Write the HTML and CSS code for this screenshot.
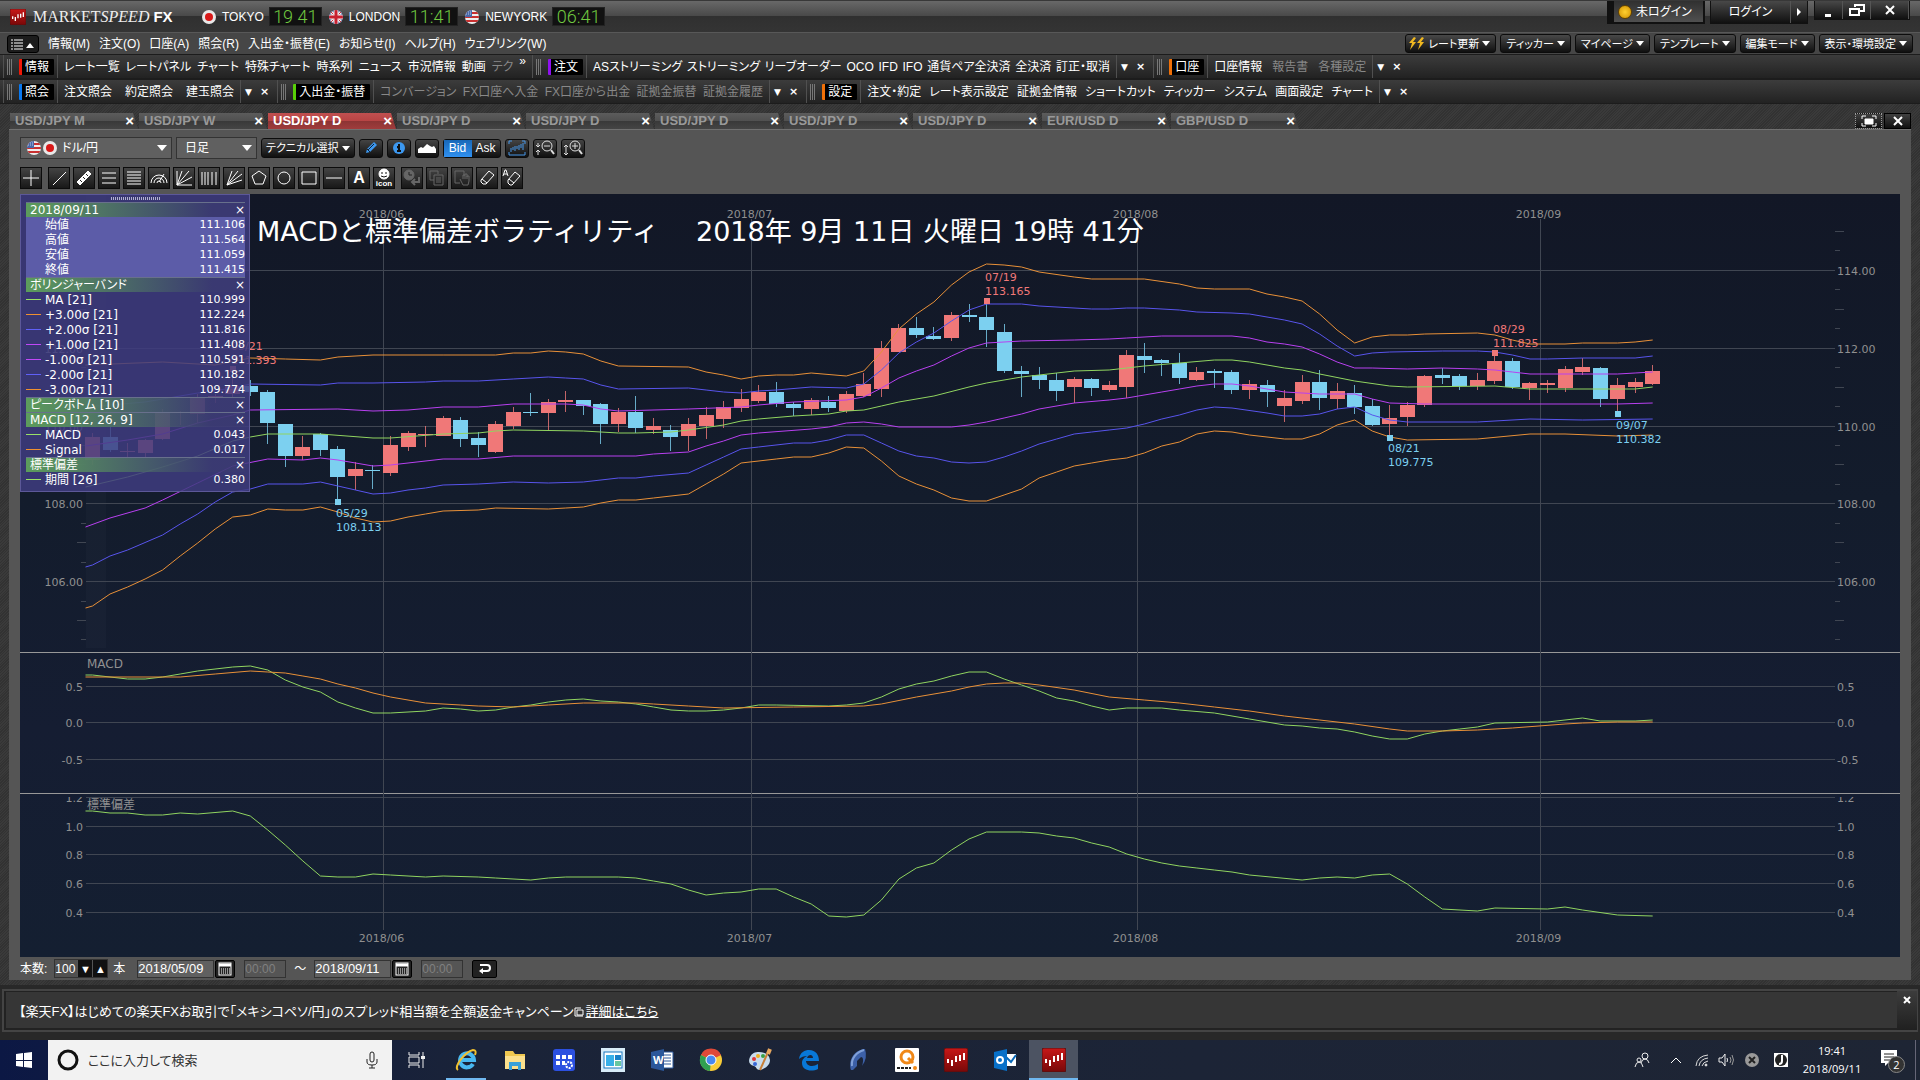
FILE: index.html
```html
<!DOCTYPE html>
<html lang="ja">
<head>
    <meta charset="UTF-8">
    <meta name="viewport" content="width=device-width, initial-scale=1.0">
    <title>MARKETSPEED FX</title>
    <link rel="stylesheet" href="styles.css">
</head>
<body>
    <!-- shared icons -->
    <svg class="defs" width="0" height="0" aria-hidden="true">
        <defs>
            <clipPath id="ball"><circle cx="8" cy="8" r="7"/></clipPath>
            <linearGradient id="redbox" x1="0" y1="0" x2="0" y2="1">
                <stop offset="0" stop-color="#c81818"/><stop offset="1" stop-color="#780808"/>
            </linearGradient>
            <symbol id="flag-jp" viewBox="0 0 16 16">
                <circle cx="8" cy="8" r="7" fill="#e8e8e8"/>
                <circle cx="8" cy="8" r="4" fill="#d81818"/>
            </symbol>
            <symbol id="flag-us" viewBox="0 0 16 16">
                <g clip-path="url(#ball)">
                    <rect width="16" height="16" fill="#eee"/>
                    <path d="M0 4h16M0 8h16M0 12h16" stroke="#c83030" stroke-width="2"/>
                    <rect width="8" height="8" fill="#4868a8"/>
                    <path d="M2 3h5M2 5h5" stroke="#b8c8e8" stroke-dasharray="1 1"/>
                </g>
            </symbol>
            <symbol id="flag-uk" viewBox="0 0 16 16">
                <g clip-path="url(#ball)">
                    <rect width="16" height="16" fill="#344a90"/>
                    <path d="M1 1l14 14M15 1L1 15" stroke="#eee" stroke-width="3"/>
                    <path d="M1 1l14 14M15 1L1 15" stroke="#c83040"/>
                    <path d="M8 0v16M0 8h16" stroke="#eee" stroke-width="5"/>
                    <path d="M8 0v16M0 8h16" stroke="#c82030" stroke-width="3"/>
                </g>
            </symbol>
            <symbol id="ms-logo" viewBox="0 0 24 24">
                <rect x="0" y="0" width="24" height="24" rx="2" fill="url(#redbox)" stroke="#501010"/>
                <path d="M4 11v4M8 12v6M12 8v6M16 7v6M20 5v7" stroke="#fff" stroke-width="2"/>
            </symbol>
            <symbol id="calendar" viewBox="0 0 14 14">
                <rect x="1" y="1" width="12" height="12" fill="none" stroke="#fff"/>
                <path d="M1 3h12" stroke="#fff" stroke-width="3"/>
                <path d="M3 7h9M3 9h9M3 11h9" stroke="#fff" stroke-dasharray="1 1"/>
            </symbol>
        </defs>
    </svg>

    <div class="window">
        <header class="titlebar">
            <svg class="app-icon"><use href="#ms-logo"/></svg>
            <h1 class="brand">MARKET<i>SPEED</i> <b>FX</b></h1>
            <div class="world">
                <svg class="flag"><use href="#flag-jp"/></svg>
                <span class="city">TOKYO</span><time class="clock">19 41</time>
                <svg class="flag"><use href="#flag-uk"/></svg>
                <span class="city">LONDON</span><time class="clock">11:41</time>
                <svg class="flag"><use href="#flag-us"/></svg>
                <span class="city">NEWYORK</span><time class="clock">06:41</time>
            </div>
            <div class="session">
                <span class="status"><i class="lamp"></i>未ログイン</span>
                <div class="login">
                    <button class="login-btn">ログイン</button>
                    <button class="login-more" aria-label="ログインメニュー">
                        <svg width="6" height="8"><path d="M1 0l4 4-4 4z" fill="#fff"/></svg>
                    </button>
                </div>
                <div class="winbtns">
                    <button aria-label="最小化"><svg width="14" height="14"><path d="M3 11h6v3h-6z" fill="#fff"/></svg></button>
                    <button aria-label="元に戻す"><svg width="16" height="14" fill="none" stroke="#fff" stroke-width="2"><path d="M6 4V2h9v6h-5"/><path d="M1 6h9v6H1z"/></svg></button>
                    <button class="wide" aria-label="閉じる"><svg width="12" height="12" stroke="#fff" stroke-width="2"><path d="M2 2l8 8M10 2l-8 8"/></svg></button>
                </div>
            </div>
        </header>

        <nav class="menubar">
            <button class="list-btn" aria-label="メニュー">
                <svg width="24" height="12"><path d="M3 2h9M3 5h9M3 8h9M3 11h9M0 2h2M0 5h2M0 8h2M0 11h2" stroke="#fff"/><path d="M15 10l4-5 4 5z" fill="#fff"/></svg>
            </button>
            <button>情報(M)</button>
            <button>注文(O)</button>
            <button>口座(A)</button>
            <button>照会(R)</button>
            <button>入出金・振替(E)</button>
            <button>お知らせ(I)</button>
            <button>ヘルプ(H)</button>
            <button>ウェブリンク(W)</button>
            <div class="quick">
                <button class="drop rate"><svg width="18" height="14" viewBox="0 0 18 14"><path d="M7 0L2 6h3l-2 7 6-8H6l3-4zM15 0l-5 6h3l-2 7 6-8h-3l3-4z" fill="#f0b820"/></svg>レート更新</button>
                <button class="drop">ティッカー</button>
                <button class="drop">マイページ</button>
                <button class="drop">テンプレート</button>
                <button class="drop">編集モード</button>
                <button class="drop">表示・環境設定</button>
            </div>
        </nav>

        <div class="toolbar">
            <div class="group info">
                <i class="grip"></i><strong class="tag red">情報</strong>
                <div class="items">
                    <button>レート一覧</button><button>レートパネル</button><button>チャート</button><button>特殊チャート</button><button>時系列</button><button>ニュース</button><button>市況情報</button><button>動画</button><button class="off">テク</button><button class="more">»</button>
                </div>
            </div>
            <div class="group order">
                <i class="grip"></i><strong class="tag purple">注文</strong>
                <div class="items">
                    <button>ASストリーミング</button><button>ストリーミング</button><button>リーブオーダー</button><button>OCO</button><button>IFD</button><button>IFO</button><button>通貨ペア全決済</button><button>全決済</button><button>訂正・取消</button>
                </div>
                <div class="ends"><button aria-label="メニュー">▼</button><button aria-label="閉じる">×</button></div>
            </div>
            <div class="group">
                <i class="grip"></i><strong class="tag orange">口座</strong>
                <div class="items">
                    <button>口座情報</button><button class="off">報告書</button><button class="off">各種設定</button>
                </div>
                <div class="ends"><button aria-label="メニュー">▼</button><button aria-label="閉じる">×</button></div>
            </div>
        </div>
        <div class="toolbar">
            <div class="group inquiry">
                <i class="grip"></i><strong class="tag blue">照会</strong>
                <div class="items">
                    <button>注文照会</button><button>約定照会</button><button>建玉照会</button>
                </div>
                <div class="ends"><button aria-label="メニュー">▼</button><button aria-label="閉じる">×</button></div>
            </div>
            <div class="group money">
                <i class="grip"></i><strong class="tag green">入出金・振替</strong>
                <div class="items">
                    <button class="off">コンバージョン</button><button class="off">FX口座へ入金</button><button class="off">FX口座から出金</button><button class="off">証拠金振替</button><button class="off">証拠金履歴</button>
                </div>
                <div class="ends"><button aria-label="メニュー">▼</button><button aria-label="閉じる">×</button></div>
            </div>
            <div class="group settings">
                <i class="grip"></i><strong class="tag orange">設定</strong>
                <div class="items">
                    <button>注文・約定</button><button>レート表示設定</button><button>証拠金情報</button><button>ショートカット</button><button>ティッカー</button><button>システム</button><button>画面設定</button><button>チャート</button>
                </div>
                <div class="ends"><button aria-label="メニュー">▼</button><button aria-label="閉じる">×</button></div>
            </div>
        </div>

        <main class="workspace">
            <div class="tabs">
                <div class="tab"><button>USD/JPY M</button><button class="x" aria-label="閉じる">×</button></div>
                <div class="tab"><button>USD/JPY W</button><button class="x" aria-label="閉じる">×</button></div>
                <div class="tab active"><button>USD/JPY D</button><button class="x" aria-label="閉じる">×</button></div>
                <div class="tab"><button>USD/JPY D</button><button class="x" aria-label="閉じる">×</button></div>
                <div class="tab"><button>USD/JPY D</button><button class="x" aria-label="閉じる">×</button></div>
                <div class="tab"><button>USD/JPY D</button><button class="x" aria-label="閉じる">×</button></div>
                <div class="tab"><button>USD/JPY D</button><button class="x" aria-label="閉じる">×</button></div>
                <div class="tab"><button>USD/JPY D</button><button class="x" aria-label="閉じる">×</button></div>
                <div class="tab"><button>EUR/USD D</button><button class="x" aria-label="閉じる">×</button></div>
                <div class="tab"><button>GBP/USD D</button><button class="x" aria-label="閉じる">×</button></div>
                <div class="tab-tools">
                    <button class="max" aria-label="最大化"><svg width="16" height="12" fill="none" stroke="#fff"><path d="M1 4V1h4M11 1h4v3M15 8v3h-4M5 11H1V8"/><path d="M4 4h8v5H4z" fill="#fff"/></svg></button>
                    <button aria-label="閉じる"><svg width="12" height="10" stroke="#fff" stroke-width="2"><path d="M2 1l8 8M10 1L2 9"/></svg></button>
                </div>
            </div>

            <section class="panel">
                <div class="row">
                    <div class="combo pair">
                        <svg class="flag"><use href="#flag-us"/></svg><svg class="flag"><use href="#flag-jp"/></svg>
                        <select aria-label="通貨ペア"><option>ドル/円</option></select>
                    </div>
                    <div class="combo term">
                        <select aria-label="足種"><option>日足</option></select>
                    </div>
                    <button class="drop tech">テクニカル選択</button>
                    <button class="ibtn" aria-label="ペン"><svg width="14" height="14" viewBox="0 0 14 14"><path d="M2 12l1-4 7-7 3 3-7 7z" fill="#3c98f0"/><path d="M4 9l6-6M3 8l3 3" stroke="#123"/></svg></button>
                    <button class="ibtn" aria-label="情報"><svg width="14" height="14" viewBox="0 0 14 14"><circle cx="7" cy="7" r="6" fill="#3c98f0"/><path d="M7 3v2M5 6h2v4M5 10h4" stroke="#111" stroke-width="2"/></svg></button>
                    <button class="ibtn" aria-label="エリア"><svg width="18" height="14" viewBox="0 0 18 14"><path d="M0 12V8l3-2 2 1 4-4 3 2 2 1 2-1 2 3v4z" fill="#fff"/></svg></button>
                    <div class="side"><button class="bid">Bid</button><button>Ask</button></div>
                    <button class="ibtn" aria-label="チャート"><svg width="18" height="16" viewBox="0 0 18 16" fill="none" stroke="#4898e8"><path d="M1 4V1h3M14 1h3v3M1 12v3h16v-3"/><path d="M3 8v4M5 7v3M7 6v5M9 6v3M11 5v5M13 4v4M15 3v7"/></svg></button>
                    <button class="ibtn" aria-label="縮小"><svg width="20" height="16" viewBox="0 0 20 16" fill="none" stroke="#ddd"><circle cx="12" cy="6" r="5"/><path d="M16 10l3 4" stroke-width="2"/><path d="M9 6h6M3 3v4M3 15v-5M1 5l2 2 2-2M1 12l2-2 2 2"/></svg></button>
                    <button class="ibtn" aria-label="拡大"><svg width="20" height="16" viewBox="0 0 20 16" fill="none" stroke="#ddd"><circle cx="12" cy="6" r="5"/><path d="M16 10l3 4" stroke-width="2"/><path d="M9 6h6M12 3v6M3 5v10M1 7l2-2 2 2M1 13l2 2 2-2"/></svg></button>
                </div>

                <div class="row draw">
                    <button class="sq cross" aria-label="十字線"><svg viewBox="0 0 20 20"><path d="M10 2v16M2 10h16"/></svg></button>
                    <button class="sq" aria-label="直線"><svg viewBox="0 0 20 20"><path d="M4 17L17 4"/></svg></button>
                    <button class="sq" aria-label="定規"><svg viewBox="0 0 20 20"><path d="M3 14L14 3l3 3L6 17z" fill="#fff"/><path d="M6 12l2 2M9 9l2 2M12 6l2 2" stroke="#222"/></svg></button>
                    <button class="sq" aria-label="平行線"><svg viewBox="0 0 20 20"><path d="M3 5h14M3 10h14M3 15h14"/></svg></button>
                    <button class="sq" aria-label="リトレースメント"><svg viewBox="0 0 20 20"><path d="M3 4h14M3 7h14M3 10h14M3 13h14M3 16h14"/></svg></button>
                    <button class="sq" aria-label="アーク"><svg viewBox="0 0 20 20"><path d="M2 15a8 8 0 0 1 16 0M5 15a5 5 0 0 1 10 0M8 15a2 2 0 0 1 4 0M10 14l5-8"/></svg></button>
                    <button class="sq" aria-label="ファン"><svg viewBox="0 0 20 20"><path d="M3 3v14h15M3 17L8 3M3 17L15 3M3 17L18 9"/></svg></button>
                    <button class="sq" aria-label="タイムゾーン"><svg viewBox="0 0 20 20"><path d="M3 4v13M6 4v13M9 4v13M13 4v13M17 4v13"/></svg></button>
                    <button class="sq" aria-label="ギャン"><svg viewBox="0 0 20 20"><path d="M3 17L8 3M3 17L14 3M3 17L18 6M3 17l15-5"/></svg></button>
                    <button class="sq" aria-label="五角形"><svg viewBox="0 0 20 20"><path d="M10 3l7 5-3 8H6L3 8z"/></svg></button>
                    <button class="sq" aria-label="円"><svg viewBox="0 0 20 20"><circle cx="10" cy="10" r="6"/></svg></button>
                    <button class="sq" aria-label="四角形"><svg viewBox="0 0 20 20"><path d="M3 4h14v12H3z"/></svg></button>
                    <button class="sq" aria-label="水平線"><svg viewBox="0 0 20 20"><path d="M2 10h16"/></svg></button>
                    <button class="sq letter">A</button>
                    <button class="sq face"><svg viewBox="0 0 20 12"><circle cx="10" cy="6" r="5" fill="#fff"/><path d="M8 4v2M12 4v2M7 8q3 2 6 0" stroke="#111"/></svg>icon</button>
                    <button class="sq dim gap" aria-label="元に戻す"><svg viewBox="0 0 20 20"><circle cx="7" cy="7" r="5" fill="#666"/><path d="M7 4v3h3" stroke="#222"/><path d="M17 9v5h-6M13 11l-3 3 3 3" stroke-width="2"/></svg></button>
                    <button class="sq dim" aria-label="コピー"><svg viewBox="0 0 20 20"><path d="M3 3h8v3M3 3v9h4M7 7h9v10H7zM9 10h5M9 12h5M9 14h5"/></svg></button>
                    <button class="sq dim" aria-label="移動"><svg viewBox="0 0 20 20"><path d="M3 3h9v5M3 3v12h5M8 11l3 6h5l1-4V8l-2 0v3M15 9V6h-2v5M13 7h-2v4"/></svg></button>
                    <button class="sq" aria-label="消しゴム"><svg viewBox="0 0 20 20"><path d="M4 12l8-9 5 4-8 9H6l-2-2zM5 11l5 4"/></svg></button>
                    <button class="sq" aria-label="全消去"><svg viewBox="0 0 20 20"><path d="M6 12l7-8 5 4-8 9H8l-2-2zM7 11l5 4M1 8l2-6h1l2 6M2 6h3"/></svg></button>
                </div>

                <div class="chart">
                    <svg id="plot" viewBox="20 194 1880 763" role="img" aria-label="USD/JPY 日足チャート"></svg>
                    <aside class="legend">
                        <i class="handle"></i>
                        <h2>2018/09/11<button aria-label="閉じる">×</button></h2>
                        <dl class="ohlc">
                            <dt>始値</dt><dd>111.106</dd>
                            <dt>高値</dt><dd>111.564</dd>
                            <dt>安値</dt><dd>111.059</dd>
                            <dt>終値</dt><dd>111.415</dd>
                        </dl>
                        <h2>ボリンジャーバンド<button aria-label="閉じる">×</button></h2>
                        <dl>
                            <dt class="k-green">MA [21]</dt><dd>110.999</dd>
                            <dt class="k-orange">+3.00σ [21]</dt><dd>112.224</dd>
                            <dt class="k-blue">+2.00σ [21]</dt><dd>111.816</dd>
                            <dt class="k-purple">+1.00σ [21]</dt><dd>111.408</dd>
                            <dt class="k-purple">-1.00σ [21]</dt><dd>110.591</dd>
                            <dt class="k-blue">-2.00σ [21]</dt><dd>110.182</dd>
                            <dt class="k-orange">-3.00σ [21]</dt><dd>109.774</dd>
                        </dl>
                        <h2>ピークボトム [10]<button aria-label="閉じる">×</button></h2>
                        <h2>MACD [12, 26, 9]<button aria-label="閉じる">×</button></h2>
                        <dl>
                            <dt class="k-green">MACD</dt><dd>0.043</dd>
                            <dt class="k-orange">Signal</dt><dd>0.017</dd>
                        </dl>
                        <h2>標準偏差<button aria-label="閉じる">×</button></h2>
                        <dl>
                            <dt class="k-green">期間 [26]</dt><dd>0.380</dd>
                        </dl>
                    </aside>
                </div>

                <form class="range">
                    <label for="bars">本数:</label>
                    <span class="spin"><input type="text" id="bars" value="100"><button type="button" aria-label="減らす">▼</button><button type="button" aria-label="増やす">▲</button></span>
                    <span class="unit">本</span>
                    <input type="text" class="date" value="2018/05/09" aria-label="開始日">
                    <button type="button" class="cal" aria-label="カレンダー"><svg width="14" height="14"><use href="#calendar"/></svg></button>
                    <input type="text" class="time" value="00:00" aria-label="開始時刻" disabled>
                    <span class="tilde">～</span>
                    <input type="text" class="date" value="2018/09/11" aria-label="終了日">
                    <button type="button" class="cal" aria-label="カレンダー"><svg width="14" height="14"><use href="#calendar"/></svg></button>
                    <input type="text" class="time" value="00:00" aria-label="終了時刻" disabled>
                    <button type="button" class="back" aria-label="戻す"><svg width="14" height="12" fill="none" stroke="#fff" stroke-width="2"><path d="M2 2h7a3 3 0 0 1 0 6H4"/><path d="M1 8l4-3v6z" fill="#fff" stroke="none"/></svg></button>
                </form>
            </section>
        </main>

        <footer class="news">
            <p>【楽天FX】はじめての楽天FXお取引で「メキシコペソ/円」のスプレッド相当額を全額返金キャンペーン<svg width="10" height="10" fill="none" stroke="#fff"><path d="M3 3h6v5H3zM1 1v8h8M1 1h6"/></svg><a href="#">詳細はこちら</a></p>
            <button aria-label="閉じる"><svg width="8" height="8" stroke="#fff" stroke-width="2"><path d="M1 1l6 6M7 1L1 7"/></svg></button>
        </footer>
    </div>

    <div class="taskbar">
        <button class="start" aria-label="スタート"><svg width="16" height="16" viewBox="0 0 16 16" fill="#fff"><path d="M0 2l7-1v7H0zM8 1l8-1v8H8zM0 9h7v6l-7-1zM8 9h8v7l-8-1z"/></svg></button>
        <div class="search">
            <svg width="22" height="22"><circle cx="11" cy="11" r="9" fill="none" stroke="#111" stroke-width="3"/></svg>
            <input type="text" placeholder="ここに入力して検索" aria-label="検索">
            <svg width="12" height="18" fill="none" stroke="#222"><rect x="4" y="1" width="4" height="10" rx="2"/><path d="M1 8v3q0 3 5 3t5-3V8M6 14v3M3 17h6"/></svg>
        </div>
        <div class="apps">
            <button aria-label="タスクビュー"><svg viewBox="0 0 24 24" fill="none" stroke="#eee"><path d="M4 4v3h10V4M4 20v-3h10v3M4 9h10v6H4zM18 4v16" /><path d="M16 8h4v3h-4z" fill="#eee" stroke="none"/></svg></button>
            <button class="run" aria-label="Internet Explorer"><svg viewBox="0 0 24 24" fill="none"><path d="M19 16a7 7 0 1 1 1-4H8" stroke="#48b8f0" stroke-width="4"/><path d="M4 22C-1 19 11 4 19 2q4 0 2 5" stroke="#f0c030" stroke-width="2"/></svg></button>
            <button aria-label="エクスプローラー"><svg viewBox="0 0 24 24"><path d="M2 3h8l2 3h10v15H2z" fill="#f0c850"/><path d="M2 8h20v13H2z" fill="#fce08c"/><path d="M6 22v-8h12v8h-3v-4H9v4z" fill="#38a0d8"/></svg></button>
            <button aria-label="設定ツール"><svg viewBox="0 0 24 24"><rect x="1" y="1" width="22" height="22" rx="3" fill="#2c50e0"/><path d="M4 7h4v4H4zM10 7h4v4h-4zM16 7h4v4h-4zM4 13h4v4H4zM10 13h3v4h-3z" fill="#fff"/><circle cx="17" cy="17" r="3" fill="none" stroke="#fff" stroke-width="2" stroke-dasharray="2 1"/></svg></button>
            <button aria-label="ウィンドウ"><svg viewBox="0 0 24 24"><rect x="0" y="0" width="24" height="24" fill="#d8ecf8"/><rect x="3" y="4" width="18" height="16" fill="#fff" stroke="#1878c0"/><path d="M5 7h8v11H5z" fill="#38b0e8"/><path d="M14 7h6v5h-6z" fill="#1880c8"/><path d="M14 13h6v5h-6z" fill="#68c8a0"/></svg></button>
            <button aria-label="Word"><svg viewBox="0 0 24 24"><path d="M12 4h11v16H12z" fill="#fff" stroke="#2b579a"/><path d="M14 7h7M14 10h7M14 13h7M14 16h7" stroke="#2b579a"/><path d="M1 4l13-3v22L1 20z" fill="#2b579a"/><text x="3" y="16" class="app-letter">W</text></svg></button>
            <button aria-label="Chrome"><svg viewBox="0 0 24 24"><circle cx="12" cy="12" r="11" fill="#f8cc38"/><path d="M12 12L2 7a11 11 0 0 1 20 0z" fill="#e04838"/><path d="M12 12l-1 11A11 11 0 0 1 2 7z" fill="#30a050"/><circle cx="12" cy="12" r="5" fill="#4888f0" stroke="#fff" stroke-width="1"/></svg></button>
            <button aria-label="ペイント"><svg viewBox="0 0 24 24"><path d="M11 4q10 0 11 8c0 6-6 9-10 10-4 0-3-3-6-4-5-1-6-5-4-9 2-4 5-5 9-5z" fill="#c8dcec"/><circle cx="6" cy="11" r="2" fill="#e03838"/><circle cx="10" cy="8" r="2" fill="#f0b020"/><circle cx="15" cy="8" r="2" fill="#38a048"/><circle cx="7" cy="16" r="2" fill="#3868d8"/><path d="M21 2l-9 20" stroke="#c88038" stroke-width="2"/><path d="M22 1l-2 5" stroke="#e8a860" stroke-width="4"/></svg></button>
            <button aria-label="Edge"><svg viewBox="0 0 24 24"><path d="M2 11C3 4 8 2 12 2c7 0 10 5 10 11H9c0 3 3 5 6 5 2 0 4-1 6-2v5c-6 3-16 2-16-6 0-4 3-6 5-7-3 0-6 1-8 3zm8-1h6c0-4-5-4-6 0z" fill="#0878d8"/></svg></button>
            <button aria-label="コネクト"><svg viewBox="0 0 24 24"><path d="M5 22C2 12 8 2 19 1q3 9-3 17c2-6 1-9-1-9l-4 4v5l-4 4z" fill="#3c60a8"/><path d="M6 18C5 11 10 4 18 2" stroke="#80a0d8" fill="none" stroke-width="2"/></svg></button>
            <button aria-label="チャートQ"><svg viewBox="0 0 24 24"><rect width="24" height="24" rx="1" fill="#fff"/><circle cx="12" cy="9" r="6" fill="none" stroke="#f08818" stroke-width="3"/><path d="M13 10l5 5" stroke="#f08818" stroke-width="3"/><path d="M2 20h14" stroke="#222" stroke-width="2" stroke-dasharray="3 1"/><circle cx="20" cy="20" r="2" fill="#f08818"/></svg></button>
            <button aria-label="MARKETSPEED"><svg><use href="#ms-logo"/></svg></button>
            <button aria-label="Outlook"><svg viewBox="0 0 24 24"><path d="M12 6h11v12H12z" fill="#fff"/><path d="M13 9l5 5 5-7" stroke="#0868b8" stroke-width="2" fill="none"/><path d="M1 4l13-3v22L1 20z" fill="#0870c8"/><circle cx="7" cy="12" r="3" fill="none" stroke="#fff" stroke-width="2"/></svg></button>
            <button class="current" aria-label="MARKETSPEED FX"><svg><use href="#ms-logo"/></svg></button>
        </div>
        <div class="tray">
            <button class="people" aria-label="People"><svg width="16" height="16" fill="none" stroke="#eee"><circle cx="11" cy="4" r="3"/><path d="M7 11q1-4 4-4t4 4"/><circle cx="5" cy="8" r="2"/><path d="M1 15q1-5 4-5t4 5"/></svg></button>
            <button class="up" aria-label="隠れているインジケーター"><svg width="12" height="8" fill="none" stroke="#fff"><path d="M1 7l5-5 5 5"/></svg></button>
            <svg width="14" height="14" fill="none" stroke="#ddd"><path d="M1 13Q2 3 13 2M4 13q1-7 9-8M7 13q1-4 6-5"/><circle cx="11" cy="12" r="1" fill="#fff"/></svg>
            <svg width="18" height="14" fill="none" stroke="#eee"><path d="M1 5h3l3-4v12l-3-4H1zM9 5q1 2 0 4"/><path d="M12 4q2 3 0 6M14 2q3 5 0 10" stroke="#999"/></svg>
            <svg class="mute" width="14" height="14"><circle cx="7" cy="7" r="7" fill="#999"/><path d="M4 4l6 6M10 4l-6 6" stroke="#222" stroke-width="2"/></svg>
            <svg class="ime" width="14" height="14"><rect width="14" height="14" fill="#fff"/><circle cx="7" cy="7" r="6" fill="#222"/><path d="M8 2v6q0 3-3 3" stroke="#fff" stroke-width="2" fill="none"/></svg>
            <time class="now">19:41<br>2018/09/11</time>
            <button class="notice" aria-label="通知"><svg width="17" height="17"><path d="M0 0h16v13H7l-3 3v-3H0z" fill="#fff"/><path d="M3 4h10M3 7h10M3 10h6" stroke="#222"/></svg><span>2</span></button>
        </div>
    </div>

    <script src="script.js"></script>
</body>
</html>
```

FILE: styles.css
```css
* {
    box-sizing: border-box;
}
body {
    margin: 0;
    min-height: 100vh;
    display: flex;
    flex-direction: column;
    background: #1c2334;
    color: #fff;
    font-family: "Liberation Sans", "Noto Sans CJK JP", sans-serif;
    font-size: 12px;
    line-height: 16px;
    font-feature-settings: "palt";
}
button, input, select {
    font: inherit;
    font-feature-settings: inherit;
    color: inherit;
    margin: 0;
    padding: 0;
    border: 0;
    background: none;
    border-radius: 0;
    white-space: nowrap;
}
h1, h2, p, dl, dd {
    margin: 0;
    font-size: inherit;
    font-weight: normal;
}
svg {
    display: block;
    flex: none;
}
.defs {
    position: absolute;
}
.window {
    background: #282828;
    padding-bottom: 8px;
}

/* title bar */
.titlebar {
    display: flex;
    align-items: center;
    height: 32px;
    padding-left: 10px;
    background: linear-gradient(#686868, #484848 50%, #303030 50%, #343434);
    border-top: 1px solid #383838;
}
.app-icon {
    width: 16px;
    height: 16px;
}
.brand {
    width: 175px;
    padding-left: 7px;
    font-family: "Liberation Serif", serif;
    font-size: 16px;
    color: #eee;
    white-space: nowrap;
}
.brand b {
    font-family: "Liberation Sans", sans-serif;
    font-size: 15px;
    color: #fff;
}
.world {
    display: flex;
    align-items: center;
}
.flag {
    width: 16px;
    height: 16px;
}
.city {
    padding: 0 5px;
}
.clock {
    width: 53px;
    height: 19px;
    margin-right: 6px;
    border: 1px solid #222;
    background: #111;
    color: #70c840;
    font-family: Roboto, sans-serif;
    font-weight: 300;
    font-size: 18px;
    line-height: 18px;
    text-align: center;
}
.session {
    display: flex;
    align-self: flex-start;
    margin-left: auto;
    padding-right: 10px;
}
.status {
    display: flex;
    align-items: center;
    gap: 4px;
    width: 98px;
    height: 23px;
    padding-left: 4px;
    border: 2px solid #111;
    border-left-width: 7px;
    border-top: 0;
    background: linear-gradient(#303030, #505050);
}
.lamp {
    width: 14px;
    height: 14px;
    border-radius: 50%;
    border: 1px solid #604000;
    background: radial-gradient(#ffd030, #d09000);
}
.login {
    display: flex;
    margin-left: 5px;
    height: 23px;
    border: 1px solid #111;
    border-top: 0;
    background: linear-gradient(#484848, #101010);
}
.login-btn {
    width: 79px;
}
.login-more {
    width: 17px;
    padding-left: 5px;
    border-left: 1px solid #555;
}
.winbtns {
    display: flex;
    height: 19px;
    margin-left: 6px;
    border: 1px solid #111;
    border-top: 0;
}
.winbtns button {
    display: flex;
    justify-content: center;
    align-items: center;
    width: 28px;
    border-right: 1px solid #555;
    background: linear-gradient(#484848, #101010);
}
.winbtns .wide {
    width: 38px;
}

/* menu */
.menubar {
    display: flex;
    align-items: center;
    gap: 9px;
    height: 22px;
    padding: 0 7px;
    background: #464646;
    border-top: 1px solid #585858;
}
.list-btn {
    padding: 2px 3px;
    border: 1px solid #000;
    border-radius: 3px;
    background: #1c1c1c;
}
.quick {
    display: flex;
    gap: 4px;
    margin-left: auto;
}
.drop {
    display: flex;
    align-items: center;
    height: 19px;
    padding: 0 5px;
    gap: 3px;
    border: 1px solid #0c0c0c;
    border-radius: 3px;
    background: linear-gradient(#484848, #101010);
    font-size: 11px;
}
.drop::after {
    content: "";
    border: 4px solid transparent;
    border-top: 5px solid #fff;
    border-bottom: 0;
}
.rate {
    padding-left: 1px;
}

/* toolbars */
.toolbar {
    display: flex;
    height: 25px;
    padding-left: 3px;
    border-top: 1px solid #1c1c1c;
    border-bottom: 1px solid #1c1c1c;
    background: linear-gradient(#3c3c3c, #222);
}
.group {
    display: flex;
    align-items: center;
    border-left: 1px solid #505050;
}
.info {
    width: 27.6%;
}
.order {
    width: 32.4%;
}
.inquiry {
    width: 14.3%;
}
.money {
    width: 27.6%;
}
.grip {
    width: 6px;
    height: 16px;
    margin: 0 6px 0 3px;
    flex: none;
    background: repeating-linear-gradient(90deg, #777 0 1px, transparent 1px 2px);
}
.tag {
    padding: 0 5px 0 3px;
    border-left: 3px solid;
    border-radius: 1px;
    background: #000;
    font-weight: normal;
    white-space: nowrap;
}
.tag.red { border-color: #f01808; }
.tag.purple { border-color: #9010f0; }
.tag.orange { border-color: #f07008; }
.tag.blue { border-color: #0878f0; }
.tag.green { border-color: #58d008; }
.items {
    display: flex;
    flex: 1;
    align-self: stretch;
    align-items: center;
    justify-content: space-between;
    gap: 4px;
    margin-left: 3px;
    padding: 0 6px;
    border-left: 1px solid #505050;
}
.group:last-child .items {
    gap: 10px;
}
.group.settings .items {
    gap: 8px;
}
.off {
    color: #888;
}
.more {
    align-self: flex-start;
    line-height: 12px;
}
.ends {
    display: flex;
    gap: 8px;
    align-self: stretch;
    align-items: center;
    padding: 0 8px 0 4px;
    border-left: 1px solid #505050;
    font-family: "DejaVu Sans", sans-serif;
    font-size: 9px;
}
.ends button:last-child {
    font-weight: bold;
    font-size: 11px;
}

/* workspace */
.workspace {
    padding: 9px 9px 5px;
    background: repeating-linear-gradient(135deg, #323232 0 1px, #3a3a3a 1px 2px);
}
.tabs {
    display: flex;
    height: 16px;
}
.tab {
    display: flex;
    align-items: center;
    justify-content: space-between;
    width: 129px;
    padding: 0 4px 0 6px;
    background: linear-gradient(#5c5c5c, #505050 50%, #383838 50%, #444);
    color: #999;
    font-size: 13px;
    font-weight: bold;
    clip-path: polygon(1px 0, calc(100% - 5px) 0, 100% 100%, 1px 100%);
}
.tab .x {
    color: #fff;
    font-size: 15px;
}
.tab.active {
    background: linear-gradient(#c05050, #b84444 50%, #8c3434 50%, #a03c3c);
    color: #fff;
}
.tab-tools {
    display: flex;
    gap: 2px;
    margin-left: auto;
}
.tab-tools button {
    display: flex;
    align-items: center;
    justify-content: center;
    width: 27px;
    border: 1px solid #000;
    background: linear-gradient(#404040, #101010);
}
.tab-tools .max {
    border: 1px dotted #999;
}
.panel {
    padding: 7px 11px 1px;
    border-top: 1px solid #707070;
    background: #555;
}
.row {
    display: flex;
    align-items: center;
    gap: 4px;
    height: 22px;
    margin-bottom: 8px;
}
.combo {
    display: flex;
    align-items: center;
    height: 22px;
    border: 1px solid #333;
    background: #606060;
}
.pair {
    width: 152px;
    padding-left: 5px;
}
.term {
    width: 81px;
    padding-left: 8px;
}
.combo select {
    flex: 1;
    min-width: 0;
    height: 20px;
    padding-left: 4px;
    appearance: none;
}
.term select {
    padding-left: 0;
}
.combo::after {
    content: "";
    margin-right: 4px;
    border: 5px solid transparent;
    border-top: 6px solid #fff;
    border-bottom: 0;
}
.tech {
    height: 20px;
    padding: 0 4px;
}
.ibtn {
    display: flex;
    align-items: center;
    justify-content: center;
    width: 24px;
    height: 19px;
    border: 1px solid #0c0c0c;
    border-radius: 3px;
    background: linear-gradient(#444, #101010);
}
.side {
    display: flex;
    height: 19px;
    border: 1px solid #0c0c0c;
    border-radius: 3px;
    background: linear-gradient(#444, #101010);
}
.side button {
    width: 28px;
}
.side .bid {
    background: linear-gradient(#1868b8, #3090f0);
}
.draw {
    gap: 3px;
    margin-bottom: 5px;
}
.sq {
    width: 22px;
    height: 22px;
    border: 1px solid #0c0c0c;
    background: linear-gradient(#444, #181818);
}
.sq svg {
    width: 20px;
    height: 20px;
    fill: none;
    stroke: #fff;
}
.cross {
    margin-right: 3px;
}
.letter {
    font-size: 16px;
    font-weight: bold;
}
.face {
    font-size: 8px;
    font-weight: bold;
    line-height: 8px;
}
.face svg {
    height: 12px;
}
.dim svg {
    stroke: #666;
}
.gap {
    margin-left: 3px;
}

/* chart */
.chart {
    position: relative;
    background: linear-gradient(#121726, #131c2c 40%, #151d32 70%, #141f31);
}
#plot {
    width: 100%;
    height: auto;
    font-family: "DejaVu Sans", "Noto Sans CJK JP", sans-serif;
    font-size: 11px;
    font-feature-settings: normal;
}
#plot .grid {
    stroke: #404652;
    fill: none;
    shape-rendering: crispEdges;
}
#plot .split {
    stroke: #989898;
    shape-rendering: crispEdges;
}
#plot .haze {
    fill: #fff;
    opacity: 0.02;
}
#plot .mask {
    fill: #141d31;
}
#plot .axis {
    fill: #909090;
}
#plot .pane {
    font-size: 12px;
}
#plot .end {
    text-anchor: end;
}
#plot .mid {
    text-anchor: middle;
}
#plot .heading {
    fill: #fff;
    font-size: 27px;
}
#plot .line {
    fill: none;
}
#plot .orange { stroke: #e89038; }
#plot .blue { stroke: #5854ec; }
#plot .purple { stroke: #b840f0; }
#plot .green { stroke: #90d460; }
#plot .up { fill: #f07878; stroke: #f07878; }
#plot .down { fill: #7cd0f0; stroke: #7cd0f0; }
#plot .note {
    stroke: none;
}
.legend {
    position: absolute;
    left: 0;
    top: 0;
    width: 230px;
    height: 298px;
    padding: 2px 4px 2px 5px;
    border: 1px solid #5c5898;
    background: rgba(64, 60, 128, 0.85);
    font-family: "DejaVu Sans", "Noto Sans CJK JP", sans-serif;
    line-height: 14px;
}
.handle {
    display: block;
    width: 50px;
    height: 3px;
    margin: 0 auto 2px;
    background: repeating-linear-gradient(90deg, #b0b0d0 0 1px, transparent 1px 2px);
}
.legend h2 {
    display: flex;
    justify-content: space-between;
    height: 15px;
    padding-left: 4px;
    border-top: 1px solid #68708c;
    background: linear-gradient(90deg, #5c9c5c, rgba(60, 60, 112, 0.5) 85%);
}
.legend h2 button {
    line-height: 14px;
}
.legend dl {
    display: grid;
    grid-template-columns: 1fr auto;
    grid-auto-rows: 15px;
    line-height: 16px;
}
.legend dt {
    display: flex;
    align-items: center;
    gap: 4px;
}
.legend dt::before {
    content: "";
    width: 15px;
    height: 1px;
}
.legend dd {
    font-size: 11px;
}
.legend .ohlc {
    background: #5c5ca8;
}
.k-green::before { background: #98e068; }
.k-orange::before { background: #f09030; }
.k-blue::before { background: #6060f8; }
.k-purple::before { background: #c048f8; }

/* range form */
.range {
    display: flex;
    align-items: center;
    height: 21px;
    margin-top: 1px;
}
.spin {
    display: flex;
    width: 54px;
    height: 19px;
    margin: 0 5px 0 7px;
    border: 1px solid #333;
}
.spin input {
    width: 22px;
    background: #505050;
}
.spin button {
    width: 15px;
    border-left: 1px solid #555;
    background: #111;
    font-size: 11px;
}
.unit {
    width: 24px;
}
.date, .time {
    height: 18px;
    border: 1px solid #333;
    background: #606060;
}
.date {
    width: 77px;
    font-size: 13px;
}
.time {
    width: 42px;
    background: #555;
    color: #808080;
    margin-left: 9px;
}
.cal, .back {
    display: flex;
    align-items: center;
    justify-content: center;
    width: 20px;
    height: 18px;
    margin-left: 1px;
    border: 1px solid #000;
    border-radius: 2px;
    background: #222;
}
.tilde {
    width: 28px;
    text-align: center;
}
.back {
    width: 25px;
    margin-left: 9px;
}

/* news line */
.news {
    display: flex;
    height: 43px;
    border: 2px solid #444;
    border-right-width: 1px;
    background: #222;
    margin: 4px 2px 0 2px;
}
.news p {
    display: flex;
    flex: 1;
    align-items: center;
    gap: 1px;
    margin: 1px 0 2px 2px;
    padding: 4px 0 0 13px;
    background: #363636;
    font-size: 13px;
}
.news a {
    color: #fff;
}
.news button {
    display: flex;
    justify-content: center;
    width: 20px;
    padding-top: 5px;
    background: linear-gradient(#3c3c3c, #202020);
}

/* taskbar */
.taskbar {
    display: flex;
    height: 40px;
    margin-top: auto;
    background: linear-gradient(90deg, #0c1844, #1a2338 25%, #1e2534);
    font-family: "Open Sans", "Noto Sans CJK JP", sans-serif;
}
.taskbar button {
    display: flex;
    align-items: center;
    justify-content: center;
}
.start {
    width: 48px;
}
.search {
    display: flex;
    align-items: center;
    width: 344px;
    padding: 0 14px 0 9px;
    background: #f2f2f2;
}
.search input {
    flex: 1;
    padding-left: 9px;
    color: #222;
    font-size: 13px;
}
.search input::placeholder {
    color: #333;
}
.apps {
    display: flex;
}
.apps button {
    width: 49px;
}
.apps svg {
    width: 24px;
    height: 24px;
}
.apps .run {
    background: linear-gradient(#70b8f0, #70b8f0) center bottom / 40px 2px no-repeat;
}
.apps .current {
    background: linear-gradient(#70b8f0, #70b8f0) center bottom / 100% 2px no-repeat #4c5362;
}
.app-letter {
    font-size: 11px;
    font-weight: bold;
    fill: #fff;
}
.tray {
    display: flex;
    align-items: center;
    gap: 9px;
    margin-left: auto;
    margin-right: 4px;
    padding-right: 14px;
    border-right: 1px solid #667;
}
.people {
    margin-right: 11px;
}
.up {
    margin-right: 4px;
}
.ime {
    margin-left: 6px;
}
.now {
    width: 70px;
    font-size: 11px;
    line-height: 18px;
    text-align: center;
}
.notice {
    position: relative;
    margin-left: 2px;
    padding-bottom: 3px;
    width: 23px;
}
.notice span {
    position: absolute;
    left: 10px;
    top: 6px;
    width: 17px;
    height: 17px;
    border: 1px solid #888;
    border-radius: 50%;
    background: #333;
    font-size: 11px;
    line-height: 15px;
}
```

FILE: script.js
```js
const NS = 'http://www.w3.org/2000/svg';
const plot = document.getElementById('plot');

// horizontal position of bar i
const barX = i => 92.5 + 17.53 * i;

function add(name, attrs, text) {
    const el = document.createElementNS(NS, name);
    for (const key in attrs) {
        el.setAttribute(key, attrs[key]);
    }
    if (text) {
        el.textContent = text;
    }
    plot.appendChild(el);
    return el;
}

function hline(x1, x2, y, cls) {
    add('path', { d: `M${x1} ${y}H${x2}`, class: cls });
}

function scale(rows) {
    rows.forEach(([label, y]) => {
        hline(86, 1835, y, 'grid');
        add('text', { x: 83, y: y + 4, class: 'axis end' }, label);
        add('text', { x: 1837, y: y + 4, class: 'axis' }, label);
    });
}

add('rect', { x: 86, y: 194, width: 20, height: 454, class: 'haze' });

// price scale
scale([['114.00', 270.5], ['112.00', 348.5], ['110.00', 426.5], ['108.00', 503.5], ['106.00', 581.5]]);

// small ticks every 0.5, a longer one on the odd prices
for (let n = 0; n <= 21; n++) {
    if (n % 4 === 2) {
        continue;
    }
    const y = Math.round(231 + n * 19.45) + 0.5;
    const len = n % 2 ? 5 : 9;
    hline(86 - len, 86, y, 'grid');
    hline(1835, 1835 + len, y, 'grid');
}

// MACD and standard deviation scales
scale([['0.5', 686.5], ['0.0', 722.5], ['-0.5', 759.5]]);
scale([['1.2', 797.5], ['1.0', 826.5], ['0.8', 854.5], ['0.6', 883.5], ['0.4', 912.5]]);

// the top label is cut off by the pane edge
add('rect', { x: 40, y: 790, width: 45, height: 7, class: 'mask' });
add('rect', { x: 1837, y: 790, width: 45, height: 7, class: 'mask' });

hline(20, 1900, 652.5, 'split');
hline(20, 1900, 793.5, 'split');

[['2018/06', 383.5], ['2018/07', 751.5], ['2018/08', 1137.5], ['2018/09', 1540.5]].forEach(([label, x]) => {
    add('path', { d: `M${x} 219V930`, class: 'grid' });
    add('text', { x: x - 2, y: 218, class: 'axis mid' }, label);
    add('text', { x: x - 2, y: 942, class: 'axis mid' }, label);
});
add('text', { x: 87, y: 668, class: 'axis pane' }, 'MACD');
add('text', { x: 87, y: 809, class: 'axis pane' }, '標準偏差');

// [direction, high, body top, body bottom, low]
const candles = [
    ['u', 433, 437, 460, 465], ['d', 427, 437, 450, 452], ['u', 443, 451, 452, 458], ['u', 439, 440, 453, 458],
    ['u', 409, 412, 439, 440], ['u', 411, 412, 413, 425], ['u', 394, 397, 414, 423], ['u', 394, 396, 397, 403],
    ['u', 368, 386, 394, 397], ['d', 380, 386, 392, 396], ['d', 390, 392, 423, 444], ['d', 424, 424, 456, 467],
    ['u', 436, 447, 456, 460], ['d', 433, 434, 450, 456], ['d', 446, 449, 477, 500], ['u', 462, 469, 476, 490],
    ['d', 465, 470, 471, 489], ['u', 436, 445, 473, 476], ['u', 431, 433, 447, 451], ['u', 426, 434, 435, 447],
    ['u', 416, 418, 436, 436], ['d', 417, 420, 439, 447], ['d', 432, 438, 445, 457], ['u', 421, 424, 452, 453],
    ['u', 407, 412, 426, 429], ['d', 393, 412, 413, 416], ['u', 399, 402, 413, 430], ['u', 391, 400, 402, 412],
    ['d', 400, 400, 406, 415], ['d', 403, 404, 424, 444], ['u', 408, 412, 424, 432], ['d', 396, 412, 428, 433],
    ['u', 418, 426, 430, 434], ['d', 425, 430, 437, 451], ['u', 418, 424, 436, 451], ['u', 407, 415, 426, 439],
    ['u', 401, 407, 419, 428], ['u', 389, 399, 408, 412], ['u', 385, 392, 401, 403], ['d', 382, 392, 404, 407],
    ['d', 402, 404, 408, 416], ['u', 398, 400, 409, 415], ['d', 396, 402, 408, 412], ['u', 391, 394, 411, 413],
    ['u', 373, 384, 396, 397], ['u', 341, 348, 389, 397], ['u', 324, 328, 352, 352], ['d', 317, 328, 335, 338],
    ['d', 327, 336, 339, 340], ['u', 312, 315, 338, 341], ['d', 304, 315, 317, 322], ['d', 303, 317, 330, 347],
    ['d', 324, 332, 371, 373], ['d', 366, 371, 374, 397], ['d', 367, 375, 380, 389], ['d', 373, 380, 391, 401],
    ['u', 377, 379, 387, 403], ['d', 378, 379, 388, 396], ['u', 381, 385, 390, 392], ['u', 350, 355, 387, 398],
    ['d', 343, 356, 360, 373], ['d', 359, 360, 363, 376], ['d', 353, 363, 378, 384], ['u', 367, 372, 380, 381],
    ['d', 369, 371, 373, 388], ['d', 370, 372, 390, 394], ['u', 380, 384, 390, 399], ['d', 380, 385, 392, 407],
    ['u', 390, 398, 406, 422], ['u', 375, 382, 401, 404], ['d', 370, 382, 398, 410], ['u', 383, 391, 399, 409],
    ['d', 385, 393, 407, 414], ['d', 399, 406, 425, 426], ['u', 405, 418, 424, 438], ['u', 402, 405, 417, 426],
    ['u', 375, 376, 405, 407], ['d', 368, 375, 378, 384], ['d', 374, 376, 386, 390], ['u', 373, 380, 386, 390],
    ['u', 353, 361, 381, 384], ['d', 358, 361, 387, 389], ['u', 382, 383, 388, 400], ['u', 380, 383, 385, 393],
    ['u', 366, 369, 388, 392], ['u', 358, 367, 372, 375], ['d', 367, 368, 399, 407], ['u', 378, 385, 399, 413],
    ['u', 378, 382, 387, 393], ['u', 365, 371, 384, 385]
];
candles.forEach(([dir, high, top, bottom, low], i) => {
    const x = Math.floor(barX(i));
    const cls = dir === 'u' ? 'up' : 'down';
    add('path', { d: `M${x + 0.5} ${high}V${low}`, class: cls, opacity: 0.8 });
    add('rect', { x: x - 7, y: top, width: 15, height: Math.max(bottom - top, 1), class: cls + ' note' });
});

// every line is a list of "bar:y" points
const lines = [
    ['orange', '-0.4:365 4:362 7:365 9:358 11:359 13:360 14:357 16:355 20:355 23:355 24:353 25:353 26:351 27:352 28:354 29:361 30:366 34:367 35:372 36:375 37:379 38:376 39:375 40:375 41:373 43:376 44:371 45:352 46:329 47:314 48:302 49:285 50:272 51:264 52:265 53:267 54:272 56:277 57:279 60:279 62:284 63:288 64:289 66:289 67:294 68:297 69:301 70:314 71:330 72:343 73:337 74:335 75:335 76:334 79:333 80:335 81:340 82:344 84:344 85:343 87:343 88:342 89:340'],
    ['blue', '-0.4:407 3:402 6:393 8:388 9:384 13:385 14:383 16:383 19:382 20:381 22:381 24:379 26:377 27:378 28:379 29:385 30:389 34:388 35:390 36:392 37:393 38:391 39:390 41:387 43:388 44:384 45:370 46:353 47:342 48:333 49:321 50:310 51:304 53:304 54:306 57:309 58:309 59:308 60:308 62:310 63:312 65:313 66:314 67:317 68:320 69:324 70:334 71:346 72:356 73:353 74:352 77:351 79:351 80:352 81:355 82:359 83:359 85:358 88:358 89:356'],
    ['purple', '-0.4:446 2:440 4:434 6:423 8:415 9:410 14:409 16:411 18:410 20:407 22:407 24:404 27:404 28:405 29:409 30:411 34:409 37:407 38:405 40:402 43:400 44:397 45:388 46:378 47:371 48:365 49:356 50:348 51:343 53:341 56:340 58:339 59:338 61:336 65:336 66:338 67:342 68:344 69:347 70:354 71:362 72:368 73:368 75:369 77:368 79:369 80:370 81:372 82:374 87:374 88:373 89:372'],
    ['green', '-0.4:487 2:477 4:467 6:456 8:441 9:437 10:434 13:434 16:438 17:438 20:434 22:433 23:431 24:430 28:431 30:433 31:433 33:432 34:430 36:425 37:421 38:419 40:416 42:414 43:411 44:410 45:406 46:402 48:396 50:387 51:383 53:377 56:371 58:370 59:368 60:366 62:363 64:360 65:360 66:362 67:365 68:368 69:370 70:374 72:381 74:386 75:387 80:386 82:389 88:389 89:387'],
    ['purple', '-0.4:527 1:518 3:508 4:500 6:483 8:466 10:459 12:460 13:458 14:460 15:463 16:466 17:465 20:459 22:459 24:456 31:456 32:454 34:452 35:446 36:441 37:435 38:433 41:429 42:427 43:423 44:422 45:424 46:427 49:427 50:425 51:422 52:418 53:414 54:409 56:403 58:400 59:398 61:392 62:389 63:386 64:384 65:384 66:386 67:389 68:392 70:394 72:394 73:399 74:403 76:404 87:404 89:403'],
    ['blue', '-0.4:567 0:565 1:556 2:550 4:535 5:524 6:514 7:502 8:492 9:489 10:484 12:484 13:482 14:486 15:490 16:494 17:493 18:490 19:488 20:485 22:484 24:482 26:483 28:482 30:478 31:478 32:476 34:473 35:465 36:457 37:449 38:447 40:443 41:443 42:440 43:435 44:435 45:443 46:451 47:456 48:458 49:462 50:463 51:462 52:457 53:451 54:444 55:439 56:434 57:432 58:430 59:428 60:424 61:419 62:415 63:410 64:407 65:408 67:413 68:416 69:416 70:414 71:409 72:407 73:415 74:420 75:422 79:422 82:419 85:420 89:419'],
    ['orange', '-0.4:608 0:606 1:594 2:587 3:579 4:570 5:556 6:543 7:529 8:517 9:515 10:509 11:510 12:510 13:507 14:512 15:518 16:522 17:521 18:517 19:514 20:511 22:510 23:508 26:509 27:508 28:507 29:503 30:500 31:500 32:498 33:496 34:494 35:484 36:474 37:463 39:459 40:457 41:457 42:453 43:447 44:448 45:461 46:476 47:484 48:490 49:498 50:501 51:501 52:495 53:489 54:478 55:472 56:466 57:463 58:460 59:458 60:453 61:446 62:442 63:434 64:431 65:432 66:435 67:437 68:439 69:439 70:434 71:425 72:420 73:431 74:437 75:440 79:439 82:434 84:434 87:436 89:435'],
    // MACD and signal
    ['green', '-0.4:675 0:675 2:679 3:679 4:677 5:674 6:671 8:667 9:666 10:670 11:680 12:687 13:692 14:702 15:708 16:713 17:713 19:711 20:708 21:709 22:711 23:710 24:707 25:705 26:702 27:700 28:699 29:701 30:702 31:704 32:707 33:710 34:711 35:711 36:710 37:708 38:705 39:705 42:706 43:705 44:703 45:697 46:689 47:684 48:681 49:676 50:672 51:672 52:679 53:685 54:691 55:698 56:701 57:706 58:710 59:708 61:708 62:710 64:713 65:716 66:719 68:725 69:726 70:728 71:729 72:732 73:736 74:739 75:739 76:734 77:731 78:729 79:727 80:723 83:722 84:720 85:718 86:721 88:721 89:720'],
    ['orange', '-0.4:677 5:677 7:674 9:671 10:672 11:673 12:676 13:679 14:684 15:688 16:693 17:697 18:700 19:703 21:705 22:706 24:707 26:705 28:703 31:703 32:704 34:706 36:708 40:707 44:706 45:704 47:697 49:691 50:687 51:684 52:683 53:683 54:685 56:690 58:697 60:700 62:703 64:707 66:711 68:716 70:720 72:724 74:729 75:731 77:731 79:730 81:728 84:724 85:723 87:722 89:722'],
    // standard deviation
    ['green', '-0.4:811 0:811 1:813 2:813 3:815 4:815 5:813 6:814 8:811 9:816 10:830 11:845 12:861 13:876 14:877 15:877 16:874 17:875 19:877 20:876 22:877 23:878 25:880 26:878 27:877 30:877 31:878 32:881 33:884 34:890 35:895 36:893 37:892 38:889 39:889 40:897 41:904 42:916 43:917 44:915 45:900 46:879 47:868 48:863 49:850 50:839 51:832 53:832 54:833 55:836 56:838 57:843 58:847 59:854 60:859 61:863 62:866 63:868 64:870 65:872 66:875 69:880 70:878 71:877 72:878 73:875 74:874 75:884 76:897 77:909 79:911 80:908 83:909 84:907 85:910 87:915 89:916']
];
lines.forEach(([color, list]) => {
    const points = list.split(' ').map(p => {
        const [i, y] = p.split(':');
        return barX(Number(i)).toFixed(1) + ',' + y;
    });
    add('polyline', { points: points.join(' '), class: 'line ' + color });
});

// peaks and bottoms: [bar, marker y, direction, first text line, date, price]
[
    [8, 366, 'up', 350, '05/21', '111.393'],
    [14, 499, 'down', 517, '05/29', '108.113'],
    [51, 298, 'up', 281, '07/19', '113.165'],
    [74, 435, 'down', 452, '08/21', '109.775'],
    [80, 350, 'up', 333, '08/29', '111.825'],
    [87, 411, 'down', 429, '09/07', '110.382']
].forEach(([i, y, cls, ty, date, price]) => {
    const x = Math.floor(barX(i));
    add('rect', { x: x - 2, y: y, width: 6, height: 6, class: cls + ' note' });
    add('text', { x: x - 1, y: ty, class: cls + ' note' }, date);
    add('text', { x: x - 1, y: ty + 14, class: cls + ' note' }, price);
});

add('text', { x: 257, y: 241, class: 'heading' }, 'MACDと標準偏差ボラティリティ');
add('text', { x: 696, y: 241, class: 'heading' }, '2018年 9月 11日 火曜日 19時 41分');
```
